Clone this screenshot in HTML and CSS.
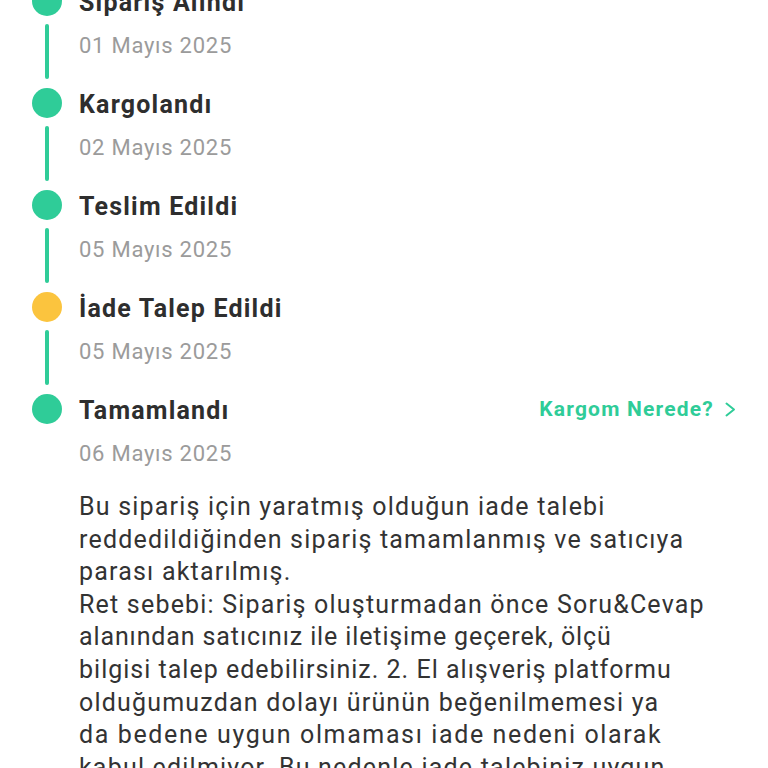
FILE: index.html
```html
<!DOCTYPE html>
<html lang="tr">
<head>
<meta charset="utf-8">
<link rel="stylesheet" href="styles.css">
</head>
<body>
<div class="page">
  <ul class="timeline">
    <li class="step">
      <div class="rail"><span class="dot"></span><span class="line"></span></div>
      <div class="info">
        <div class="title-row"><span class="title">Sipariş Alındı</span></div>
        <div class="date">01 Mayıs 2025</div>
      </div>
    </li>
    <li class="step">
      <div class="rail"><span class="dot"></span><span class="line"></span></div>
      <div class="info">
        <div class="title-row"><span class="title">Kargolandı</span></div>
        <div class="date">02 Mayıs 2025</div>
      </div>
    </li>
    <li class="step">
      <div class="rail"><span class="dot"></span><span class="line"></span></div>
      <div class="info">
        <div class="title-row"><span class="title">Teslim Edildi</span></div>
        <div class="date">05 Mayıs 2025</div>
      </div>
    </li>
    <li class="step">
      <div class="rail"><span class="dot dot-warn"></span><span class="line"></span></div>
      <div class="info">
        <div class="title-row"><span class="title">İade Talep Edildi</span></div>
        <div class="date">05 Mayıs 2025</div>
      </div>
    </li>
    <li class="step step-last">
      <div class="rail"><span class="dot"></span></div>
      <div class="info">
        <div class="title-row">
          <span class="title">Tamamlandı</span>
          <a class="track-link">Kargom Nerede?<svg class="chev" viewBox="0 0 11 15" width="11" height="15"><path d="M1.5 1.5 L9 7.5 L1.5 13.5" fill="none" stroke="currentColor" stroke-width="2" stroke-linecap="round" stroke-linejoin="round"/></svg></a>
        </div>
        <div class="date">06 Mayıs 2025</div>
        <p class="note"><span class="ln">Bu sipariş için yaratmış olduğun iade talebi</span><span class="ln">reddedildiğinden sipariş tamamlanmış ve satıcıya</span><span class="ln">parası aktarılmış.</span><span class="ln">Ret sebebi: Sipariş oluşturmadan önce Soru&amp;Cevap</span><span class="ln ln-tight">alanından satıcınız ile iletişime geçerek, ölçü</span><span class="ln ln-snug">bilgisi talep edebilirsiniz. 2. El alışveriş platformu</span><span class="ln">olduğumuzdan dolayı ürünün beğenilmemesi ya</span><span class="ln ln-loose">da bedene uygun olmaması iade nedeni olarak</span><span class="ln">kabul edilmiyor. Bu nedenle iade talebiniz uygun</span><span class="ln">bulunmamıştır.</span></p>
      </div>
    </li>
  </ul>
</div>
</body>
</html>
```

FILE: styles.css
```css
* { box-sizing: border-box; }
html, body { margin: 0; padding: 0; background: #fff; }
body {
  font-family: Roboto, "Noto Sans", "Liberation Sans", sans-serif;
  color: #333;
  overflow: hidden;
  height: 768px;
}
.page {
  padding: 0 32px 0 32px;
  margin-top: -14px;
}
.timeline {
  list-style: none;
  margin: 0;
  padding: 0;
}
.step {
  display: grid;
  grid-template-columns: 30px 1fr;
  column-gap: 17px;
  height: 102px;
}
.step-last { height: auto; }
.rail {
  display: flex;
  flex-direction: column;
  align-items: center;
}
.dot {
  width: 30px;
  height: 30px;
  border-radius: 50%;
  background: #2fcc98;
  flex: none;
}
.dot-warn { background: #fbc43e; }
.line {
  width: 4px;
  flex: 1;
  margin: 8px 0 9px;
  background: #2fcc98;
  border-radius: 2px;
}
.info { min-width: 0; }
.title-row {
  display: flex;
  align-items: center;
  justify-content: space-between;
  height: 30px;
}
.title {
  font-weight: 700;
  font-size: 25px;
  letter-spacing: 1.2px;
  line-height: 30px;
  color: #2e2e2e;
  position: relative;
  top: 2px;
}
.date {
  margin-top: 15px;
  font-size: 22px;
  letter-spacing: 0.75px;
  line-height: 30px;
  color: #9b9b9b;
}
.track-link {
  display: flex;
  align-items: center;
  gap: 11px;
  color: #2fcc98;
  font-weight: 700;
  font-size: 21px;
  letter-spacing: 1.2px;
  line-height: 30px;
}
.chev { display: block; }
.note {
  margin: 22px 0 0;
  font-size: 25px;
  letter-spacing: 1.2px;
  line-height: 32.6px;
  color: #333;
}
.ln { display: block; white-space: nowrap; }
.ln-tight { letter-spacing: 0.88px; }
.ln-snug { letter-spacing: 1.01px; }
.ln-loose { letter-spacing: 1.62px; }
```
